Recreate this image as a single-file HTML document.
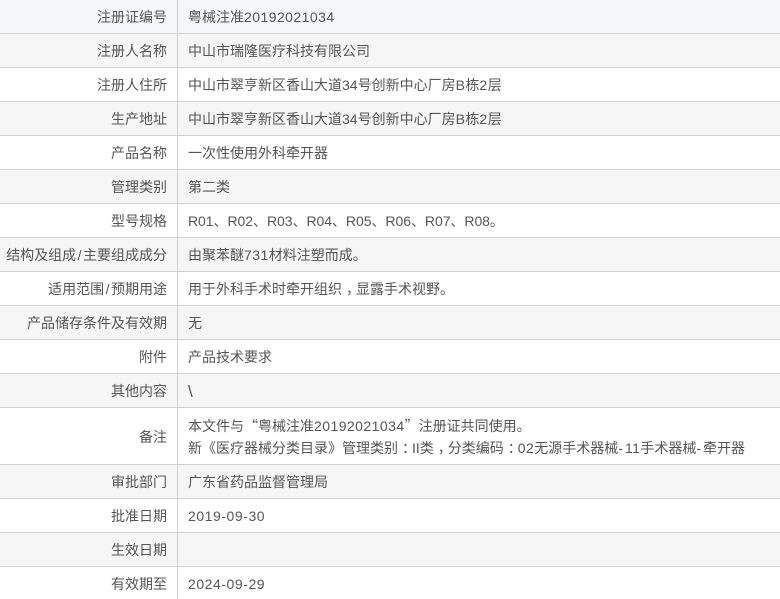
<!DOCTYPE html>
<html lang="zh-CN">
<head>
<meta charset="utf-8">
<title>医疗器械注册信息</title>
<style>
html,body{margin:0;padding:0;width:780px;height:599px;overflow:hidden;background:#fff}
body{position:relative;font-family:"Liberation Sans","Noto Sans CJK SC",sans-serif;font-size:14px;color:#555}
.r{position:absolute;left:0;width:780px;border-bottom:1px solid #d2d2d2;box-sizing:border-box}
.g{background:#f6f6f6}
.l{position:absolute;left:0;width:167px;text-align:right;white-space:nowrap;line-height:35px}
.v{position:absolute;left:188px;white-space:nowrap;line-height:35px}
.n{letter-spacing:.45px}
.h{letter-spacing:2px}
.d{letter-spacing:.55px}
.s{margin:0 1.5px}
.p{position:relative;left:4px}
.q{font-family:"Noto Sans CJK SC",sans-serif}
.b{letter-spacing:.5px}
.vl{position:absolute;left:177px;top:0;width:1px;height:599px;background:#d2d2d2}
</style>
</head>
<body>
<div class="r" style="top:0;height:34px;background:#f5f6f9"><div class="l">注册证编号</div><div class="v">粤械注准<span class="n">20192021034</span></div></div>
<div class="r g" style="top:34px;height:34px"><div class="l">注册人名称</div><div class="v">中山市瑞隆医疗科技有限公司</div></div>
<div class="r" style="top:68px;height:34px"><div class="l">注册人住所</div><div class="v">中山市翠亨新区香山大道34号创新中心厂房<span class="b">B</span>栋<span class="b">2</span>层</div></div>
<div class="r g" style="top:102px;height:34px"><div class="l">生产地址</div><div class="v">中山市翠亨新区香山大道34号创新中心厂房<span class="b">B</span>栋<span class="b">2</span>层</div></div>
<div class="r" style="top:136px;height:34px"><div class="l">产品名称</div><div class="v">一次性使用外科牵开器</div></div>
<div class="r g" style="top:170px;height:34px"><div class="l">管理类别</div><div class="v">第二类</div></div>
<div class="r" style="top:204px;height:34px"><div class="l">型号规格</div><div class="v" style="letter-spacing:-.05px">R01、R02、R03、R04、R05、R06、R07、R08。</div></div>
<div class="r g" style="top:238px;height:34px"><div class="l">结构及组成<span class="s">/</span>主要组成成分</div><div class="v">由聚苯醚<span class="n">731</span>材料注塑而成。</div></div>
<div class="r" style="top:272px;height:34px"><div class="l">适用范围<span class="s">/</span>预期用途</div><div class="v">用于外科手术时牵开组织<span class="p">，</span>显露手术视野。</div></div>
<div class="r g" style="top:306px;height:34px"><div class="l">产品储存条件及有效期</div><div class="v">无</div></div>
<div class="r" style="top:340px;height:34px"><div class="l">附件</div><div class="v">产品技术要求</div></div>
<div class="r g" style="top:374px;height:34px"><div class="l">其他内容</div><div class="v" style="font-size:17px">\</div></div>
<div class="r" style="top:408px;height:57px"><div class="l" style="line-height:58px">备注</div><div class="v" style="top:7px;line-height:22px">本文件与<span class="q">“</span>粤械注准<span class="n">20192021034</span><span class="q">”</span>注册证共同使用。<br>新《医疗器械分类目录》管理类别<span class="p">：</span>II类<span class="p">，</span>分类编码<span class="p">：</span><span class="n">02</span>无源手术器械<span class="h">-</span><span class="n">11</span>手术器械<span class="h">-</span>牵开器</div></div>
<div class="r g" style="top:465px;height:34px"><div class="l">审批部门</div><div class="v">广东省药品监督管理局</div></div>
<div class="r" style="top:499px;height:34px"><div class="l">批准日期</div><div class="v d">2019-09-30</div></div>
<div class="r g" style="top:533px;height:34px"><div class="l">生效日期</div></div>
<div class="r" style="top:567px;height:34px"><div class="l">有效期至</div><div class="v d">2024-09-29</div></div>
<div class="vl"></div>
</body>
</html>
